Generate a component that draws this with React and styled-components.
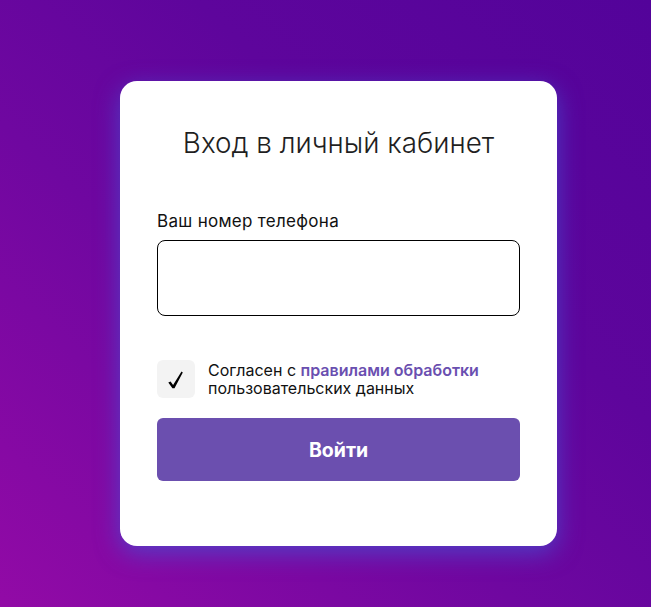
import React from "react";
import styled, { createGlobalStyle } from "styled-components";

const Global = createGlobalStyle`
  html, body { margin: 0; padding: 0; }
  body {
    font-family: Inter, "Noto Sans", "Liberation Sans", sans-serif;
    background: linear-gradient(to top right, #920aa6 0%, #6f07a0 40%, #5e059c 65%, #53039a 100%);
    min-height: 100vh;
  }
  * { box-sizing: border-box; }
`;

const Page = styled.div`
  min-height: 607px;
  display: flex;
  align-items: flex-start;
  justify-content: flex-start;
  padding-top: 81px;
  padding-left: 120px;
`;

const Card = styled.form`
  width: 437px;
  background: #fff;
  border-radius: 17px;
  box-shadow: 0 7px 24px rgba(70, 80, 210, 0.75);
  padding: 45px 37px 65px;
  display: flex;
  flex-direction: column;
`;

const Title = styled.h1`
  margin: 0;
  text-align: center;
  font-size: 27.8px;
  line-height: 34px;
  font-weight: 300;
  color: #1f1f1f;
`;

const Label = styled.label`
  margin-top: 51px;
  font-size: 17px;
  line-height: 21px;
  letter-spacing: 0.3px;
  color: #111;
  font-weight: 400;
`;

const Input = styled.input`
  margin-top: 8px;
  width: 100%;
  height: 76px;
  border: 1px solid #000;
  border-radius: 8px;
  outline: none;
  padding: 0 14px;
  font-size: 16px;
  font-family: inherit;
`;

const AgreeRow = styled.div`
  margin-top: 44px;
  display: flex;
  align-items: center;
  gap: 13px;
`;

const CheckBox = styled.div`
  width: 38px;
  height: 38px;
  flex: none;
  border-radius: 6px;
  background: #f3f3f3;
  display: flex;
  align-items: center;
  justify-content: center;
  padding-top: 2px;
  padding-right: 2px;
`;

const AgreeText = styled.p`
  margin: 0;
  font-size: 16px;
  line-height: 18.5px;
  color: #111;
`;

const Link = styled.a`
  color: #6a4fb0;
  font-weight: 600;
  text-decoration: none;
`;

const Button = styled.button`
  margin-top: 20px;
  height: 63px;
  width: 100%;
  border: none;
  border-radius: 6px;
  background: #6b4faf;
  color: #fff;
  font-family: inherit;
  font-size: 19.5px;
  font-weight: 700;
  cursor: pointer;
`;

const CheckIcon = () => (
  <svg width="15" height="18" viewBox="0 0 15 18">
    <path
      d="M0.3 11.6 L2.6 10.4 L5.1 13.9 L13.5 0.6 L14.8 1.5 L6.5 17.2 L4.4 17.2 Z"
      fill="#000"
    />
  </svg>
);

export default function App() {
  return (
    <>
      <Global />
      <Page>
        <Card onSubmit={(e) => e.preventDefault()}>
          <Title>Вход в личный кабинет</Title>
          <Label htmlFor="phone">Ваш номер телефона</Label>
          <Input id="phone" type="tel" />
          <AgreeRow>
            <CheckBox>
              <CheckIcon />
            </CheckBox>
            <AgreeText>
              Согласен с <Link href="#">правилами обработки</Link>
              <br />
              пользовательских данных
            </AgreeText>
          </AgreeRow>
          <Button type="submit">Войти</Button>
        </Card>
      </Page>
    </>
  );
}
